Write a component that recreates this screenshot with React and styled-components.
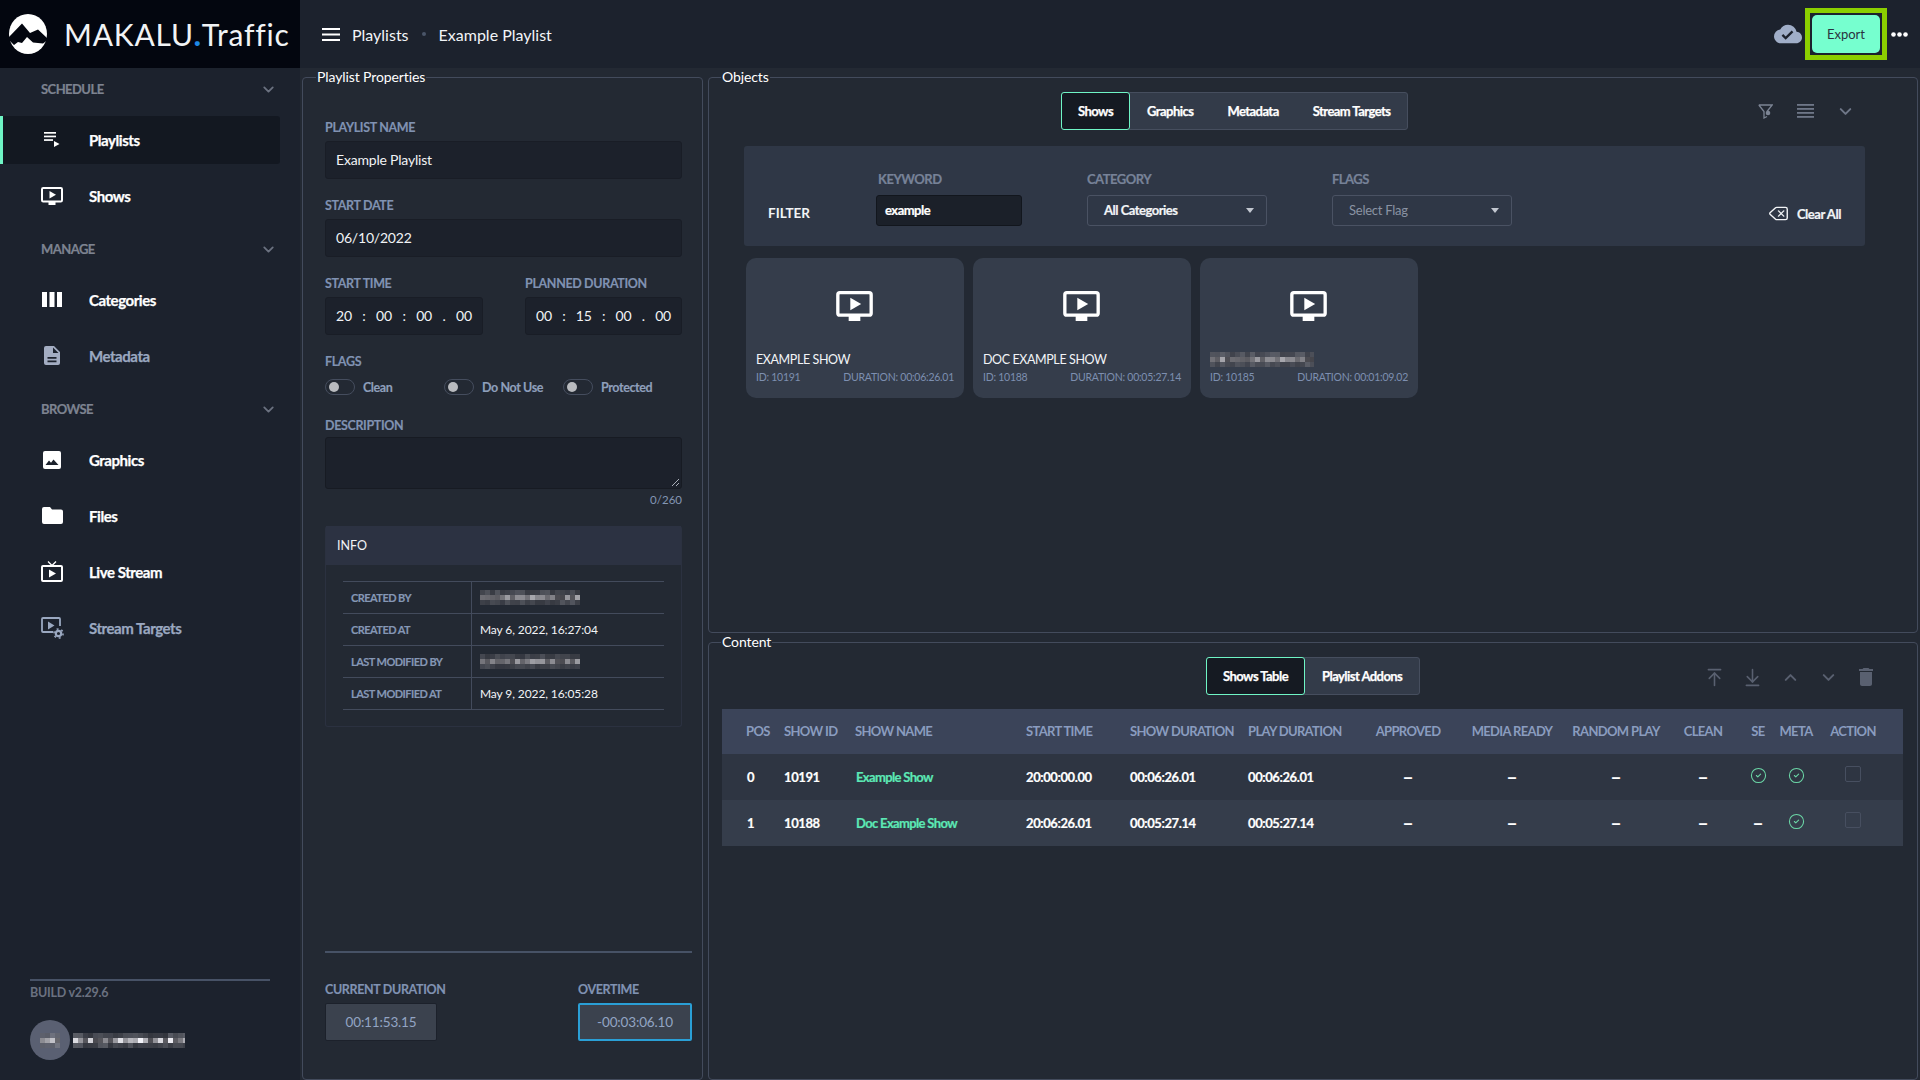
import React from "react";
import styled, { createGlobalStyle } from "styled-components";
import { ChevronDown, ChevronUp, ArrowUpToLine, ArrowDownToLine, Delete, CircleCheck } from "lucide-react";
import { MdCloudDone, MdDelete } from "react-icons/md";

const GlobalStyle = createGlobalStyle`
  html, body { margin: 0; padding: 0; background: #232933; }
  body { font-family: Lato, "Liberation Sans", sans-serif; color: #fff; }
  * { box-sizing: border-box; }
`;

const Shell = styled.div`
  display: grid;
  grid-template-columns: 300px 1fr;
  width: 1920px;
  height: 1080px;
  overflow: hidden;
`;

const Sidebar = styled.aside`
  display: flex;
  flex-direction: column;
  background: #1c222d;
  height: 1080px;
`;
const LogoBar = styled.div`
  display: flex;
  align-items: center;
  height: 68px;
  flex: none;
  padding-left: 9px;
  gap: 17px;
  background: #03060f;
`;
const LogoText = styled.div`
  font-size: 30px;
  font-weight: 400;
  letter-spacing: 0.8px;
  color: #f1f3f5;
  white-space: nowrap;
  span { color: #1e88e5; font-weight: 900; }
`;
const Nav = styled.nav`
  display: flex;
  flex-direction: column;
  padding-top: 11px;
`;
const SectionHeader = styled.div`
  display: flex;
  align-items: center;
  justify-content: space-between;
  height: 20px;
  margin: ${(p) => (p.$first ? "0 23px 17px 41px" : "11px 23px 17px 41px")};
  font-size: 13px;
  font-weight: 700;
  letter-spacing: -0.55px;
  -webkit-text-stroke: 0.2px #7d8390;
  color: #7d8390;
  svg { color: #6b7280; }
`;
const NavItem = styled.div`
  display: flex;
  align-items: center;
  width: 280px;
  height: 48px;
  margin-bottom: 8px;
  padding: ${(p) => (p.$active ? "0 0 1px 37px" : "0 0 1px 40px")};
  gap: 25px;
  font-size: 15px;
  font-weight: 700;
  letter-spacing: -0.45px;
  -webkit-text-stroke: 0.25px currentColor;
  color: ${(p) => (p.$dim ? "#9aa8c0" : "#fff")};
  background: ${(p) => (p.$active ? "#131821" : "transparent")};
  border-left: ${(p) => (p.$active ? "3px solid #6ff5c5" : "none")};
  border-radius: 0 3px 3px 0;
`;
const NavIcon = styled.span`
  display: flex;
  align-items: center;
  justify-content: center;
  width: 24px;
  height: 24px;
  flex: none;
`;
const SideFooter = styled.div`
  margin-top: auto;
  padding: 0 30px 20px;
`;
const FooterRule = styled.div`
  width: 240px;
  height: 2px;
  background: #475266;
`;
const BuildText = styled.div`
  margin-top: 4px;
  font-size: 12.5px;
  font-weight: 700;
  letter-spacing: -0.25px;
  color: #6a7180;
`;
const UserRow = styled.div`
  display: flex;
  align-items: center;
  margin-top: 20px;
  gap: 3px;
`;
const Avatar = styled.div`
  display: flex;
  align-items: center;
  justify-content: center;
  width: 40px;
  height: 40px;
  border-radius: 50%;
  background: #5a6072;
`;

const Main = styled.main`
  display: flex;
  flex-direction: column;
  min-width: 0;
`;
const TopBar = styled.header`
  display: flex;
  align-items: center;
  height: 68px;
  flex: none;
  padding: 0 12px 0 22px;
  background: #1c222d;
  font-size: 16px;
`;
const Crumb = styled.span`
  color: #f2f4f7;
  margin-left: ${(p) => p.$ml || 0}px;
`;
const CrumbDot = styled.span`
  width: 4px;
  height: 4px;
  margin-left: 13px;
  border-radius: 50%;
  background: #4a5568;
`;
const TopRight = styled.div`
  display: flex;
  align-items: center;
  margin-left: auto;
`;
const ExportFrame = styled.div`
  margin-left: 3px;
  padding: 2px;
  border: 5px solid #8bcf00;
`;
const ExportButton = styled.button`
  display: block;
  width: 68px;
  height: 38px;
  border: 0;
  border-radius: 5px;
  background: #76ffcf;
  color: #2a3340;
  font: 400 13px Lato, sans-serif;
`;
const Dots = styled.svg`
  margin-left: 4px;
`;

const Workspace = styled.div`
  flex: 1;
  display: grid;
  grid-template-columns: 401px 1fr;
  grid-template-rows: 565px 1fr;
  column-gap: 5px;
  padding: 0 2px;
  min-height: 0;
  background: #232933;
`;
const Panel = styled.fieldset`
  display: flex;
  flex-direction: column;
  grid-row: ${(p) => p.$row || "auto"};
  min-width: 0;
  min-height: 0;
  margin: 0;
  padding: 0;
  border: 1px solid #434b5c;
  border-radius: 4px;
  background: #232933;
`;
const PanelTitle = styled.legend`
  height: 18px;
  margin-left: ${(p) => p.$ml || 12}px;
  padding: 0 1px;
  font-size: 14px;
  line-height: 18px;
  color: #fff;
  letter-spacing: -0.1px;
`;

const Form = styled.div`
  flex: 1;
  display: flex;
  flex-direction: column;
  padding: 34px 10px 38px 22px;
  min-height: 0;
`;
const FormBody = styled.div`
  width: 357px;
`;
const FieldLabel = styled.label`
  display: block;
  height: 16px;
  margin-bottom: ${(p) => (p.$tight ? 3 : 5)}px;
  font-size: 12.5px;
  line-height: 16px;
  font-weight: 700;
  letter-spacing: -0.35px;
  -webkit-text-stroke: 0.15px #8092b2;
  color: #8092b2;
  white-space: nowrap;
`;
const TextField = styled.div`
  display: flex;
  align-items: center;
  height: 38px;
  margin-bottom: 19px;
  padding: 0 0 2px 10px;
  background: #1c212b;
  border: 1px solid #191d26;
  border-radius: 3px;
  font-size: 14px;
  color: #f1f3f6;
  letter-spacing: -0.2px;
`;
const TimeRow = styled.div`
  display: grid;
  grid-template-columns: 158px 157px;
  column-gap: 42px;
`;
const TimeField = styled(TextField)`
  justify-content: space-between;
  padding: 0 10px 1px;
`;
const FlagsRow = styled.div`
  display: grid;
  grid-template-columns: 119px 119px 1fr;
  height: 16px;
  margin: 9px 0 23px;
`;
const Flag = styled.div`
  display: flex;
  align-items: center;
  gap: 8px;
  font-size: 12.5px;
  font-weight: 700;
  letter-spacing: -0.4px;
  -webkit-text-stroke: 0.15px #8e9fbb;
  color: #8e9fbb;
`;
const Toggle = styled.span`
  display: flex;
  align-items: center;
  width: 30px;
  height: 16px;
  padding-left: 3px;
  border: 1px solid #454d5e;
  border-radius: 8px;
  &::before {
    content: "";
    width: 10px;
    height: 10px;
    border-radius: 50%;
    background: #b9bbbf;
  }
`;
const TextArea = styled.div`
  position: relative;
  height: 52px;
  background: #1c212b;
  border: 1px solid #171b23;
  border-radius: 3px;
`;
const Grip = styled.svg`
  position: absolute;
  right: 1px;
  bottom: 1px;
`;
const Counter = styled.div`
  margin-top: 4px;
  text-align: right;
  font-size: 11.5px;
  line-height: 14px;
  color: #8496b4;
`;
const InfoBox = styled.section`
  height: 201px;
  margin-top: 19px;
  border: 1px solid #2b3140;
  border-top: 0;
  border-radius: 3px;
`;
const InfoHead = styled.div`
  display: flex;
  align-items: center;
  height: 39px;
  padding-left: 11px;
  background: #2c3242;
  font-size: 12.5px;
  color: #f2f4f7;
`;
const InfoTable = styled.div`
  margin: 16px 17px 0;
  border-top: 1px solid #434b5c;
`;
const InfoRow = styled.div`
  display: grid;
  grid-template-columns: 129px 1fr;
  height: 32px;
  border-bottom: 1px solid #434b5c;
`;
const InfoKey = styled.div`
  display: flex;
  align-items: center;
  padding-left: 8px;
  border-right: 1px solid #434b5c;
  font-size: 11px;
  font-weight: 700;
  letter-spacing: -0.55px;
  -webkit-text-stroke: 0.15px #8597b5;
  color: #8597b5;
`;
const InfoVal = styled.div`
  display: flex;
  align-items: center;
  padding-left: 8px;
  font-size: 12px;
  letter-spacing: -0.1px;
  color: #f2f4f7;
`;
const DurationBar = styled.div`
  display: flex;
  justify-content: space-between;
  margin-top: auto;
  padding-top: 29px;
  border-top: 2px solid #475266;
`;
const DurationBox = styled.div`
  display: flex;
  align-items: center;
  justify-content: center;
  width: ${(p) => (p.$alert ? 114 : 112)}px;
  height: 38px;
  background: #3b424e;
  border: ${(p) => (p.$alert ? "2px solid #2a9fd6" : "1px solid #1c212b")};
  border-radius: 2px;
  font-size: 13.5px;
  letter-spacing: -0.15px;
  color: #93a5c4;
`;

const ToolRow = styled.div`
  display: flex;
  align-items: center;
  height: 38px;
  flex: none;
  margin-top: ${(p) => p.$mt}px;
  padding-left: ${(p) => p.$left}px;
  padding-right: ${(p) => p.$right}px;
`;
const Tabs = styled.div`
  display: flex;
  height: 38px;
  background: #333b49;
  border: 1px solid #464e5e;
  border-radius: 3px;
`;
const Tab = styled.div`
  display: flex;
  align-items: center;
  height: 38px;
  margin: -1px 0 0 ${(p) => (p.$active ? "-1px" : "0")};
  padding: 0 16px;
  font-size: 13px;
  font-weight: 700;
  letter-spacing: -0.55px;
  -webkit-text-stroke: 0.25px #fff;
  color: #fff;
  background: ${(p) => (p.$active ? "#151a22" : "transparent")};
  border: ${(p) => (p.$active ? "1px solid #6ff5c5" : "1px solid transparent")};
  border-radius: 3px;
`;
const Tools = styled.div`
  display: flex;
  align-items: center;
  gap: ${(p) => p.$gap}px;
  margin: ${(p) => p.$mt || 0}px 0 0 auto;
  color: ${(p) => p.$color};
`;
const ToolIcon = styled.span`
  display: flex;
  align-items: center;
  justify-content: center;
  width: 24px;
  height: 24px;
`;
const FilterBar = styled.div`
  display: flex;
  align-items: flex-end;
  height: 100px;
  flex: none;
  margin: 16px 52px 0 35px;
  padding: 0 24px 20px;
  background: #2f3746;
  border-radius: 3px;
`;
const FilterTitle = styled.div`
  width: 108px;
  margin-bottom: 5px;
  font-size: 13.5px;
  line-height: 16px;
  font-weight: 700;
  color: #f2f4f7;
`;
const FilterField = styled.div`
  width: ${(p) => p.$w}px;
  margin-right: ${(p) => p.$mr || 0}px;
`;
const FilterLabel = styled.div`
  height: 16px;
  margin-bottom: 8px;
  padding-left: ${(p) => p.$pl || 0}px;
  font-size: 13px;
  line-height: 16px;
  font-weight: 700;
  letter-spacing: -0.5px;
  -webkit-text-stroke: 0.2px #778298;
  color: #778298;
`;
const KeywordInput = styled.div`
  display: flex;
  align-items: center;
  height: 31px;
  padding: 0 0 1px 8px;
  background: #1b2029;
  border: 1px solid #12161d;
  border-radius: 3px;
  font-size: 13px;
  font-weight: 700;
  letter-spacing: -0.5px;
  -webkit-text-stroke: 0.2px #fff;
`;
const SelectBox = styled.div`
  display: flex;
  align-items: center;
  justify-content: space-between;
  height: 31px;
  padding: 0 12px 1px 16px;
  border: 1px solid #4a5263;
  border-radius: 3px;
  font-size: 13px;
  font-weight: ${(p) => (p.$placeholder ? 400 : 700)};
  letter-spacing: ${(p) => (p.$placeholder ? "-0.25px" : "-0.5px")};
  -webkit-text-stroke: ${(p) => (p.$placeholder ? "0" : "0.2px #f2f4f7")};
  color: ${(p) => (p.$placeholder ? "#8a93a3" : "#f2f4f7")};
  &::after {
    content: "";
    border-left: 4.5px solid transparent;
    border-right: 4.5px solid transparent;
    border-top: 5px solid #c2c7d0;
  }
`;
const ClearAll = styled.div`
  display: flex;
  align-items: center;
  gap: 8px;
  margin: 0 0 2px auto;
  font-size: 13px;
  font-weight: 700;
  letter-spacing: -0.45px;
  -webkit-text-stroke: 0.2px #f2f4f7;
  color: #f2f4f7;
`;
const Cards = styled.div`
  display: flex;
  gap: 9px;
  margin: 12px 0 0 37px;
`;
const Card = styled.article`
  display: flex;
  flex-direction: column;
  width: 218px;
  height: 140px;
  padding: 33px 10px 14px;
  background: #353d4b;
  border-radius: 10px;
`;
const CardIcon = styled.div`
  display: flex;
  justify-content: center;
  margin-left: -1px;
`;
const CardTitle = styled.div`
  display: flex;
  align-items: center;
  height: 15px;
  margin-top: auto;
  padding-top: 1px;
  font-size: 12.5px;
  letter-spacing: -0.4px;
  color: #f2f4f7;
`;
const CardMeta = styled.div`
  display: flex;
  justify-content: space-between;
  margin-top: 4px;
  font-size: 10.5px;
  line-height: 14px;
  letter-spacing: -0.25px;
  color: #7d8fb0;
`;

const TableWrap = styled.div`
  margin: 14px 14px 0 13px;
`;
const columns = "38px 71px 171px 104px 118px 107px 106px 102px 106px 68px 42px 34px 80px 10px";
const HeadRow = styled.div`
  display: grid;
  grid-template-columns: ${columns};
  height: 45px;
  padding: 0 0 2px 24px;
  align-items: center;
  background: #3b4459;
  font-size: 13px;
  font-weight: 700;
  letter-spacing: -0.65px;
  color: #8a9cbf;
`;
const BodyRow = styled.div`
  display: grid;
  grid-template-columns: ${columns};
  height: 46px;
  padding-left: 24px;
  align-items: center;
  background: ${(p) => (p.$alt ? "#353d4b" : "#2e3542")};
  font-size: 13px;
  font-weight: 700;
  letter-spacing: -0.4px;
  -webkit-text-stroke: 0.2px currentColor;
  color: #fff;
`;
const Cell = styled.div`
  display: flex;
  justify-content: ${(p) => (p.$center ? "center" : "flex-start")};
  white-space: nowrap;
  padding-left: ${(p) => p.$pl || 0}px;
`;
const Dash = styled.span`
  font-size: 19px;
  line-height: 16px;
  letter-spacing: 0;
`;
const ShowLink = styled.span`
  color: #5ce8b5;
  letter-spacing: -0.65px;
`;
const OkIcon = styled(CircleCheck)`
  margin-top: -4px;
  color: #6bd6a6;
`;
const RowCheck = styled.span`
  display: block;
  width: 16px;
  height: 16px;
  margin-top: -6px;
  border: 1px solid #474f60;
  border-radius: 2px;
`;

/* ---------- drawings ---------- */
const LogoMark = () => (
  <svg width="38" height="40" viewBox="0 0 38 40">
    <ellipse cx="19" cy="20" rx="19" ry="20" fill="#fff" />
    <path d="M0 23 13 9.500 21 19 29 15.500 38 24V26.500L34 29.500 24 28.500 18 23 13 29 9 28 5 31 0 26z" fill="#03060f" />
  </svg>
);
const PlaylistIcon = () => (
  <svg width="16" height="15" viewBox="0 0 16 15" fill="#fff">
    <rect x="0" y="0" width="12" height="1.7" />
    <rect x="0" y="3.600" width="12" height="1.700" />
    <rect x="0" y="7.200" width="9" height="1.700" />
    <path d="M10 9 15.500 12 10 15z" />
  </svg>
);
const ScreenIcon = ({ w = 22, h = 18, c = "#fff" }) => (
  <svg width={w} height={h} viewBox="0 0 22 18" fill={c}>
    <rect x="1" y="1" width="20" height="13.500" rx="1.200" fill="none" stroke={c} strokeWidth="2" />
    <rect x="7.500" y="15" width="7" height="3" />
    <path d="M8.500 4 15 7.800 8.500 11.500z" />
  </svg>
);
const ColumnsIcon = () => (
  <svg width="20" height="15" viewBox="0 0 20 15" fill="#fff">
    <rect x="0" width="5" height="15" />
    <rect x="7.500" width="5" height="15" />
    <rect x="15" width="5" height="15" />
  </svg>
);
const DocIcon = () => (
  <svg width="16" height="19" viewBox="0 0 16 19" fill="#a3adc2">
    <path fillRule="evenodd" d="M2 0h8l6 6v11a2 2 0 0 1-2 2H2a2 2 0 0 1-2-2V2a2 2 0 0 1 2-2zm7 1.500V7h5.500zM3.500 11v1.700h9V11zm0 3.500v1.700h9v-1.700z" />
  </svg>
);
const ImageIcon = () => (
  <svg width="18" height="18" viewBox="0 0 18 18">
    <rect width="18" height="18" rx="2" fill="#fff" />
    <path d="M2.500 14 6 9.500l2 2.300 2.500-3.300L15.500 14z" fill="#1c222d" />
  </svg>
);
const FolderIcon = () => (
  <svg width="21" height="17" viewBox="0 0 21 17" fill="#fff">
    <path d="M2 0h6l2 2.500h9a2 2 0 0 1 2 2V15a2 2 0 0 1-2 2H2a2 2 0 0 1-2-2V2a2 2 0 0 1 2-2z" />
  </svg>
);
const LiveIcon = () => (
  <svg width="22" height="21" viewBox="0 0 22 21" fill="#fff">
    <path d="M7 .5 11 4.500 15 .5" fill="none" stroke="#fff" strokeWidth="1.300" />
    <rect x="1" y="5" width="20" height="15" rx="1" fill="none" stroke="#fff" strokeWidth="2" />
    <path d="M8 8.500 15 12.500 8 16.500z" />
  </svg>
);
const TargetIcon = () => (
  <svg width="23" height="22" viewBox="0 0 23 22" fill="#9aa8c0">
    <path d="M12 15H2a1 1 0 0 1-1-1V2a1 1 0 0 1 1-1h16a1 1 0 0 1 1 1v7" fill="none" stroke="#9aa8c0" strokeWidth="1.800" />
    <path d="M7 4.500 13.500 8.500 7 12.500z" />
    <circle cx="17.500" cy="16.500" r="2.700" fill="none" stroke="#9aa8c0" strokeWidth="2.200" />
    <circle cx="17.500" cy="16.500" r="4.600" fill="none" stroke="#9aa8c0" strokeWidth="1.500" strokeDasharray="2 2.800" />
  </svg>
);
const BurgerIcon = () => (
  <svg width="18" height="13" viewBox="0 0 18 13" fill="#fff">
    <rect width="18" height="2" />
    <rect y="5.500" width="18" height="2" />
    <rect y="11" width="18" height="2" />
  </svg>
);
const FunnelIcon = () => (
  <svg width="15" height="15" viewBox="0 0 15 15" fill="none" stroke="#7c8494" strokeWidth="1.300">
    <path d="M.8 1h13.400L9 7.500M.8 1 6 7.500v6.500l3-1.500" />
    <circle cx="10" cy="9" r="2.300" fill="#7c8494" stroke="none" />
  </svg>
);
const LinesIcon = () => (
  <svg width="17" height="14" viewBox="0 0 17 14" fill="#6f7788">
    <rect width="17" height="1.800" />
    <rect y="4" width="17" height="1.800" />
    <rect y="8" width="17" height="1.800" />
    <rect y="12" width="17" height="1.800" />
  </svg>
);
const Mosaic = ({ w, h = 15, seed = 7, light = 205 }) => {
  const cell = 5;
  const rows = Math.ceil(h / cell);
  const cols = Math.ceil(w / cell);
  const rects = [];
  let s = seed;
  for (let r = 0; r < rows; r += 1) {
    for (let c = 0; c < cols; c += 1) {
      s = (s * 137 + 59) % 251;
      const band = r === 1 ? 1 : 0.4;
      const v = Math.round(70 + ((s % 100) / 100) * (light - 70) * band);
      rects.push(<rect key={`${r}-${c}`} x={c * cell} y={r * cell} width={cell} height={cell} fill={`rgb(${v},${v},${v + 6})`} opacity={r === 1 ? 1 : 0.55} />);
    }
  }
  return <svg width={w} height={h} viewBox={`0 0 ${w} ${h}`}>{rects}</svg>;
};

/* ---------- data ---------- */
const shows = [
  { id: 10191, title: "EXAMPLE SHOW", duration: "00:06:26.01" },
  { id: 10188, title: "DOC EXAMPLE SHOW", duration: "00:05:27.14" },
  { id: 10185, title: null, duration: "00:01:09.02" },
];
const heads = ["POS", "SHOW ID", "SHOW NAME", "START TIME", "SHOW DURATION", "PLAY DURATION"];
const centerHeads = ["APPROVED", "MEDIA READY", "RANDOM PLAY", "CLEAN", "SE", "META", "ACTION"];
const rows = [
  { pos: 0, id: 10191, name: "Example Show", start: "20:00:00.00", show: "00:06:26.01", play: "00:06:26.01", se: true },
  { pos: 1, id: 10188, name: "Doc Example Show", start: "20:06:26.01", show: "00:05:27.14", play: "00:05:27.14", se: false },
];

const TimeValue = ({ parts }) => (
  <TimeField>
    <span>{parts[0]}</span><span>:</span><span>{parts[1]}</span><span>:</span><span>{parts[2]}</span><span>.</span><span>{parts[3]}</span>
  </TimeField>
);

export default function App() {
  return (
    <Shell>
      <GlobalStyle />
      <Sidebar>
        <LogoBar>
          <LogoMark />
          <LogoText>MAKALU<span>.</span>Traffic</LogoText>
        </LogoBar>
        <Nav>
          <SectionHeader $first>SCHEDULE<ChevronDown size={17} strokeWidth={2.5} /></SectionHeader>
          <NavItem $active><NavIcon><PlaylistIcon /></NavIcon>Playlists</NavItem>
          <NavItem><NavIcon><ScreenIcon /></NavIcon>Shows</NavItem>
          <SectionHeader>MANAGE<ChevronDown size={17} strokeWidth={2.5} /></SectionHeader>
          <NavItem><NavIcon><ColumnsIcon /></NavIcon>Categories</NavItem>
          <NavItem $dim><NavIcon><DocIcon /></NavIcon>Metadata</NavItem>
          <SectionHeader>BROWSE<ChevronDown size={17} strokeWidth={2.5} /></SectionHeader>
          <NavItem><NavIcon><ImageIcon /></NavIcon>Graphics</NavItem>
          <NavItem><NavIcon><FolderIcon /></NavIcon>Files</NavItem>
          <NavItem><NavIcon><LiveIcon /></NavIcon>Live Stream</NavItem>
          <NavItem $dim><NavIcon><TargetIcon /></NavIcon>Stream Targets</NavItem>
        </Nav>
        <SideFooter>
          <FooterRule />
          <BuildText>BUILD v2.29.6</BuildText>
          <UserRow>
            <Avatar><Mosaic w={20} h={15} seed={31} light={240} /></Avatar>
            <Mosaic w={112} h={15} seed={12} light={250} />
          </UserRow>
        </SideFooter>
      </Sidebar>

      <Main>
        <TopBar>
          <BurgerIcon />
          <Crumb $ml={12}>Playlists</Crumb>
          <CrumbDot />
          <Crumb $ml={13}>Example Playlist</Crumb>
          <TopRight>
            <MdCloudDone size={28} color="#a0aec8" />
            <ExportFrame><ExportButton>Export</ExportButton></ExportFrame>
            <Dots width="17" height="5" viewBox="0 0 17 5" fill="#fff">
              <circle cx="2.500" cy="2.500" r="2.300" />
              <circle cx="8.500" cy="2.500" r="2.300" />
              <circle cx="14.500" cy="2.500" r="2.300" />
            </Dots>
          </TopRight>
        </TopBar>

        <Workspace>
          <Panel $row="1 / span 2">
            <PanelTitle $ml={13}>Playlist Properties</PanelTitle>
            <Form>
              <FormBody>
                <FieldLabel>PLAYLIST NAME</FieldLabel>
                <TextField>Example Playlist</TextField>
                <FieldLabel>START DATE</FieldLabel>
                <TextField>06/10/2022</TextField>
                <TimeRow>
                  <div>
                    <FieldLabel>START TIME</FieldLabel>
                    <TimeValue parts={["20", "00", "00", "00"]} />
                  </div>
                  <div>
                    <FieldLabel>PLANNED DURATION</FieldLabel>
                    <TimeValue parts={["00", "15", "00", "00"]} />
                  </div>
                </TimeRow>
                <FieldLabel $tight>FLAGS</FieldLabel>
                <FlagsRow>
                  <Flag><Toggle />Clean</Flag>
                  <Flag><Toggle />Do Not Use</Flag>
                  <Flag><Toggle />Protected</Flag>
                </FlagsRow>
                <FieldLabel $tight>DESCRIPTION</FieldLabel>
                <TextArea>
                  <Grip width="9" height="9" viewBox="0 0 9 9" stroke="#aab0ba" strokeWidth="1">
                    <path d="M1 8 8 1M5 8 8 5" />
                  </Grip>
                </TextArea>
                <Counter>0/260</Counter>
                <InfoBox>
                  <InfoHead>INFO</InfoHead>
                  <InfoTable>
                    <InfoRow><InfoKey>CREATED BY</InfoKey><InfoVal><Mosaic w={100} seed={5} /></InfoVal></InfoRow>
                    <InfoRow><InfoKey>CREATED AT</InfoKey><InfoVal>May 6, 2022, 16:27:04</InfoVal></InfoRow>
                    <InfoRow><InfoKey>LAST MODIFIED BY</InfoKey><InfoVal><Mosaic w={100} seed={88} light={170} /></InfoVal></InfoRow>
                    <InfoRow><InfoKey>LAST MODIFIED AT</InfoKey><InfoVal>May 9, 2022, 16:05:28</InfoVal></InfoRow>
                  </InfoTable>
                </InfoBox>
              </FormBody>
              <DurationBar>
                <div>
                  <FieldLabel>CURRENT DURATION</FieldLabel>
                  <DurationBox>00:11:53.15</DurationBox>
                </div>
                <div>
                  <FieldLabel>OVERTIME</FieldLabel>
                  <DurationBox $alert>-00:03:06.10</DurationBox>
                </div>
              </DurationBar>
            </Form>
          </Panel>

          <Panel>
            <PanelTitle>Objects</PanelTitle>
            <ToolRow $mt={6} $left={352} $right={60}>
              <Tabs>
                <Tab $active>Shows</Tab>
                <Tab>Graphics</Tab>
                <Tab>Metadata</Tab>
                <Tab>Stream Targets</Tab>
              </Tabs>
              <Tools $gap={16} $color="#6f7788">
                <ToolIcon><FunnelIcon /></ToolIcon>
                <ToolIcon><LinesIcon /></ToolIcon>
                <ToolIcon><ChevronDown size={19} strokeWidth={2.5} /></ToolIcon>
              </Tools>
            </ToolRow>
            <FilterBar>
              <FilterTitle>FILTER</FilterTitle>
              <FilterField $w={146} $mr={65}>
                <FilterLabel $pl={2}>KEYWORD</FilterLabel>
                <KeywordInput>example</KeywordInput>
              </FilterField>
              <FilterField $w={180} $mr={65}>
                <FilterLabel>CATEGORY</FilterLabel>
                <SelectBox>All Categories</SelectBox>
              </FilterField>
              <FilterField $w={180}>
                <FilterLabel>FLAGS</FilterLabel>
                <SelectBox $placeholder>Select Flag</SelectBox>
              </FilterField>
              <ClearAll><Delete size={21} strokeWidth={1.6} />Clear All</ClearAll>
            </FilterBar>
            <Cards>
              {shows.map((s) => (
                <Card key={s.id}>
                  <CardIcon><ScreenIcon w={37} h={30} /></CardIcon>
                  <CardTitle>{s.title || <Mosaic w={104} h={15} seed={44} />}</CardTitle>
                  <CardMeta><span>ID: {s.id}</span><span>DURATION: {s.duration}</span></CardMeta>
                </Card>
              ))}
            </Cards>
          </Panel>

          <Panel>
            <PanelTitle>Content</PanelTitle>
            <ToolRow $mt={6} $left={497} $right={39}>
              <Tabs>
                <Tab $active>Shows Table</Tab>
                <Tab>Playlist Addons</Tab>
              </Tabs>
              <Tools $gap={14} $mt={2} $color="#596070">
                <ToolIcon><ArrowUpToLine size={21} strokeWidth={1.8} /></ToolIcon>
                <ToolIcon><ArrowDownToLine size={21} strokeWidth={1.8} /></ToolIcon>
                <ToolIcon><ChevronUp size={19} strokeWidth={2.5} /></ToolIcon>
                <ToolIcon><ChevronDown size={19} strokeWidth={2.5} /></ToolIcon>
                <ToolIcon><MdDelete size={24} /></ToolIcon>
              </Tools>
            </ToolRow>
            <TableWrap>
              <HeadRow>
                {heads.map((h) => <Cell key={h}>{h}</Cell>)}
                {centerHeads.map((h) => <Cell key={h} $center>{h}</Cell>)}
              </HeadRow>
              {rows.map((r, i) => (
                <BodyRow key={r.id} $alt={i === 1}>
                  <Cell $pl={1}>{r.pos}</Cell>
                  <Cell>{r.id}</Cell>
                  <Cell $pl={1}><ShowLink>{r.name}</ShowLink></Cell>
                  <Cell>{r.start}</Cell>
                  <Cell>{r.show}</Cell>
                  <Cell>{r.play}</Cell>
                  <Cell $center><Dash>–</Dash></Cell>
                  <Cell $center><Dash>–</Dash></Cell>
                  <Cell $center><Dash>–</Dash></Cell>
                  <Cell $center><Dash>–</Dash></Cell>
                  <Cell $center>{r.se ? <OkIcon size={17} strokeWidth={1.5} /> : <Dash>–</Dash>}</Cell>
                  <Cell $center><OkIcon size={17} strokeWidth={1.5} /></Cell>
                  <Cell $center><RowCheck /></Cell>
                </BodyRow>
              ))}
            </TableWrap>
          </Panel>
        </Workspace>
      </Main>
    </Shell>
  );
}
